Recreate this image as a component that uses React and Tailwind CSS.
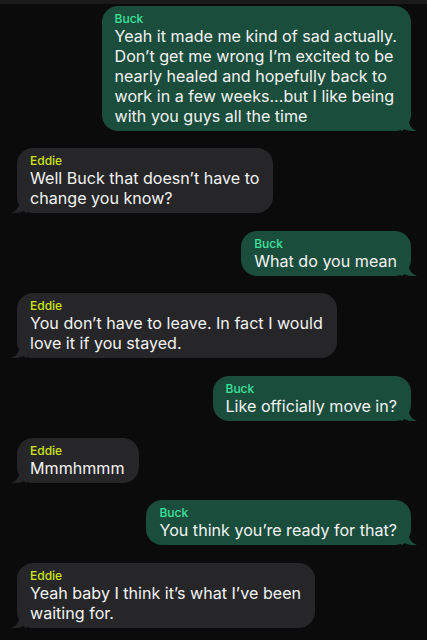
const messages = [
  {
    from: "Buck",
    lines: [
      "Yeah it made me kind of sad actually.",
      "Don\u2019t get me wrong I\u2019m excited to be",
      "nearly healed and hopefully back to",
      "work in a few weeks...but I like being",
      "with you guys all the time",
    ],
  },
  { from: "Eddie", lines: ["Well Buck that doesn\u2019t have to", "change you know?"] },
  { from: "Buck", lines: ["What do you mean"] },
  { from: "Eddie", lines: ["You don\u2019t have to leave. In fact I would", "love it if you stayed."] },
  { from: "Buck", lines: ["Like officially move in?"] },
  { from: "Eddie", lines: ["Mmmhmmm"] },
  { from: "Buck", lines: ["You think you\u2019re ready for that?"] },
  { from: "Eddie", lines: ["Yeah baby I think it\u2019s what I\u2019ve been", "waiting for."] },
];

function Tail({ mine }) {
  return (
    <svg
      width="16"
      height="16"
      viewBox="0 0 16 16"
      className={
        mine
          ? "absolute bottom-0 right-[-6px]"
          : "absolute bottom-0 left-[-6px] -scale-x-100"
      }
    >
      <path
        d="M0 0 H7 C7 9 10 14 16 16 C11 16.5 6 15.6 3.5 14 C2.5 15 1.5 16 0 16 Z"
        fill={mine ? "#1b4d3c" : "#262628"}
      />
    </svg>
  );
}

function Bubble({ msg }) {
  const mine = msg.from === "Buck";
  return (
    <div className={mine ? "flex justify-end" : "flex justify-start"}>
      <div
        className={
          "relative rounded-[16px] pl-[13px] pr-[14px] pt-[6px] pb-[5px] " +
          (mine ? "bg-[#1b4d3c]" : "bg-[#262628]")
        }
      >
        <div
          className={
            "text-[12px] leading-[14px] font-medium " +
            (mine ? "text-[#3be39c]" : "text-[#cde713]")
          }
        >
          {msg.from}
        </div>
        <div className="text-[16.1px] leading-[20px] text-[#f4f4f4] whitespace-nowrap">
          {msg.lines.map((l, i) => (
            <div key={i}>{l}</div>
          ))}
        </div>
        <Tail mine={mine} />
      </div>
    </div>
  );
}

export default function App() {
  return (
    <div
      className="w-[427px] h-[640px] bg-[#0b0b0b] overflow-hidden"
      style={{ fontFamily: "Inter, 'Noto Sans', sans-serif" }}
    >
      <div className="h-[4px] bg-[#1a1a1a]" />
      <div className="flex flex-col gap-[17.4px] pt-[2px] pl-[17px] pr-[16px]">
        {messages.map((m, i) => (
          <Bubble key={i} msg={m} />
        ))}
      </div>
    </div>
  );
}
